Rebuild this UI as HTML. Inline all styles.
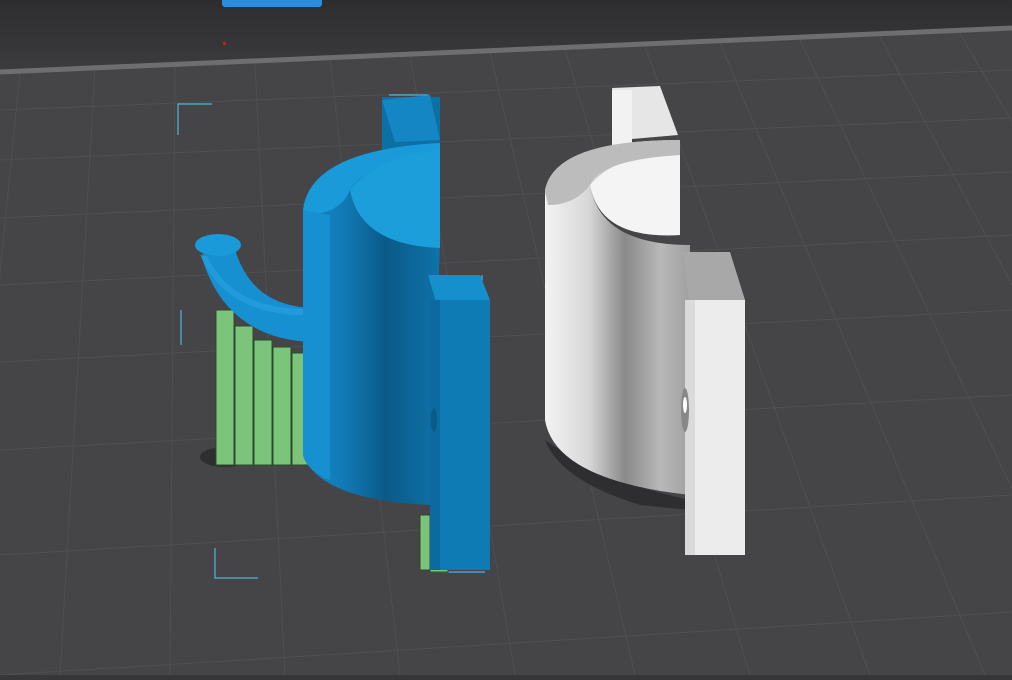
<!DOCTYPE html><html><head><style>html,body{margin:0;padding:0;background:#363638;overflow:hidden}</style></head><body>
<svg width="1012" height="675" viewBox="0 0 1012 675" xmlns="http://www.w3.org/2000/svg">
<defs>
<linearGradient id="top" x1="0" y1="0" x2="0" y2="1"><stop offset="0" stop-color="#2d2d2f"/><stop offset="1" stop-color="#3c3c3e"/></linearGradient>
<linearGradient id="bb" x1="0" y1="0" x2="1" y2="0"><stop offset="0" stop-color="#1486c4"/><stop offset="0.3" stop-color="#117ab6"/><stop offset="0.6" stop-color="#0a5a88"/><stop offset="1" stop-color="#0f72a8"/></linearGradient>
<linearGradient id="wb" x1="0" y1="0" x2="1" y2="0"><stop offset="0" stop-color="#f2f2f2"/><stop offset="0.3" stop-color="#d8d8d8"/><stop offset="0.55" stop-color="#8a8a8a"/><stop offset="0.8" stop-color="#b8b8b8"/><stop offset="1" stop-color="#a0a0a0"/></linearGradient>
</defs>
<rect width="1012" height="675" fill="#454547"/>
<polygon points="0,0 1012,0 1012,27 0,72" fill="url(#top)"/>
<g stroke="#4f4f51" stroke-width="1">
<line x1="0" y1="110" x2="1012" y2="70"/><line x1="0" y1="160" x2="1012" y2="118"/><line x1="0" y1="218" x2="1012" y2="172"/><line x1="0" y1="285" x2="1012" y2="235"/><line x1="0" y1="362" x2="1012" y2="310"/><line x1="0" y1="450" x2="1012" y2="395"/><line x1="0" y1="555" x2="1012" y2="495"/><line x1="0" y1="675" x2="1012" y2="612"/>
<line x1="20" y1="72" x2="-40" y2="675"/><line x1="95" y1="68" x2="60" y2="675"/><line x1="175" y1="65" x2="170" y2="675"/><line x1="255" y1="62" x2="285" y2="675"/><line x1="330" y1="58" x2="400" y2="675"/><line x1="410" y1="55" x2="515" y2="675"/><line x1="490" y1="52" x2="635" y2="675"/><line x1="565" y1="49" x2="750" y2="675"/><line x1="645" y1="46" x2="870" y2="675"/><line x1="720" y1="43" x2="985" y2="675"/><line x1="800" y1="40" x2="1100" y2="675"/><line x1="880" y1="37" x2="1220" y2="675"/><line x1="960" y1="34" x2="1340" y2="675"/>
</g>
<line x1="0" y1="72" x2="1012" y2="28" stroke="#6e6e70" stroke-width="5"/>
<rect x="222" y="-6" width="100" height="13" rx="3" fill="#2a8ee0"/>
<rect x="223" y="42" width="3" height="3" fill="#c02020"/>
<g stroke="#4ab8d8" stroke-width="1.2" fill="none">
<path d="M178,135 V104 H212"/><path d="M389,95 H428 V110"/><path d="M215,548 V578 H258"/><path d="M181,310 V345"/><path d="M482,275 V300"/><path d="M430,572 H485"/>
</g>
<ellipse cx="225" cy="457" rx="25" ry="10" fill="#2e2e30"/>
<path d="M545,440 Q560,480 640,505 L690,510 L690,500 Q600,480 560,450Z" fill="#2e2e30"/>
<g fill="#7cc47c" stroke="#2a4a2a" stroke-width="1">
<rect x="216" y="310" width="18" height="155"/><rect x="235" y="326" width="18" height="139"/><rect x="254" y="340" width="18" height="125"/><rect x="273" y="347" width="18" height="118"/><rect x="292" y="353" width="18" height="112"/>
<rect x="420" y="515" width="10" height="55"/><rect x="430" y="562" width="18" height="10"/>
</g>
<path d="M218,252 Q238,322 312,325" stroke="#1690d0" stroke-width="34" fill="none"/>
<path d="M203,254 Q228,314 312,312" stroke="#2aa4e4" stroke-width="6" fill="none" opacity=".6"/>
<ellipse cx="218" cy="245" rx="23" ry="11" fill="#1a9ad8"/>
<rect x="382" y="97" width="58" height="60" fill="#0e6fa4"/>
<path d="M382,100 L430,95 L440,140 L395,142Z" fill="#1486c4"/>
<path d="M303,210 Q310,150 440,143 L440,248 Q360,245 350,190 Q330,200 330,210 Z" fill="#1990cf"/>
<path d="M303,210 L303,455 Q320,500 430,505 L440,245 Q360,245 350,190 Q315,190 303,210Z" fill="url(#bb)"/>
<path d="M303,210 Q310,150 440,143 L440,160 Q360,165 350,190 Q340,215 303,215Z" fill="#1a9ad8"/>
<path d="M350,190 Q360,245 440,248 L440,150 Q380,155 350,190Z" fill="#1b9ed9"/>
<path d="M303,210 L303,455 Q306,470 330,480 L330,215Z" fill="#1690d0"/>
<polygon points="428,275 480,275 490,300 437,305" fill="#1690cc"/>
<rect x="430" y="300" width="60" height="270" fill="#0f7bb5"/>
<rect x="430" y="300" width="10" height="270" fill="#0c6aa0"/>
<ellipse cx="434" cy="420" rx="3" ry="12" fill="#0a5a88"/>
<path d="M612,88 L660,86 L678,135 L620,140Z" fill="#e6e6e6"/>
<rect x="612" y="90" width="20" height="60" fill="#f2f2f2"/>
<path d="M545,190 Q555,140 680,140 L680,235 Q600,240 590,185 Q560,185 545,195Z" fill="#cfcfcf"/>
<path d="M590,185 Q600,240 680,235 L680,150 Q615,155 590,185Z" fill="#f4f4f4"/>
<path d="M545,195 L545,420 Q555,480 690,495 L690,245 Q600,245 590,185 Q555,185 545,195Z" fill="url(#wb)"/>
<path d="M545,190 Q555,140 680,140 L680,155 Q600,160 590,185 Q575,205 548,205Z" fill="#bcbcbc"/>
<polygon points="683,252 730,252 745,300 690,310" fill="#a8a8a8"/>
<rect x="688" y="300" width="57" height="255" fill="#ececec"/>
<rect x="685" y="300" width="10" height="255" fill="#dadada"/>
<ellipse cx="685" cy="410" rx="4" ry="22" fill="#888"/>
<ellipse cx="685" cy="405" rx="2" ry="8" fill="#fff"/>
</svg>
</body></html>
